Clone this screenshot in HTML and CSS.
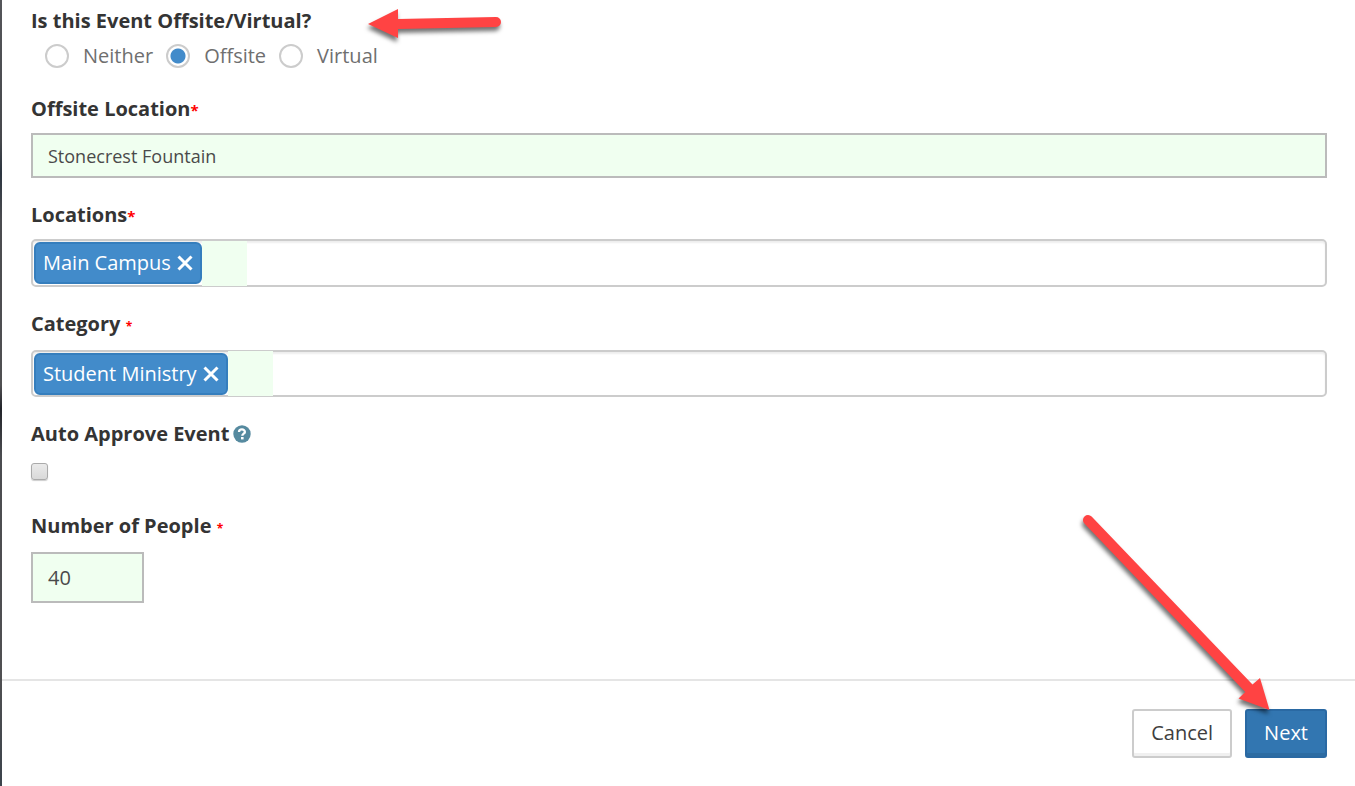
FILE: index.html
```
<!DOCTYPE html>
<html lang="en">
<head>
<meta charset="utf-8">
<meta name="viewport" content="width=device-width, initial-scale=1">
<title>Event details</title>
<link rel="stylesheet" href="styles.css">
</head>
<body>
<form class="dialog">
  <div class="dialog-body">
    <fieldset class="field choice-field">
      <legend class="label">Is this Event Offsite/Virtual?</legend>
      <div class="choices">
        <label class="choice"><input class="radio" type="radio" name="place"><span>Neither</span></label>
        <label class="choice"><input class="radio" type="radio" name="place" checked><span>Offsite</span></label>
        <label class="choice"><input class="radio" type="radio" name="place"><span>Virtual</span></label>
      </div>
    </fieldset>
    <div class="field">
      <label class="label" for="offsite">Offsite Location<span class="required">*</span></label>
      <input class="text-input" id="offsite" type="text" value="Stonecrest Fountain">
    </div>
    <div class="field">
      <label class="label" for="locations">Locations<span class="required">*</span></label>
      <div class="tag-box">
        <span class="tag">Main Campus
          <button class="tag-remove" type="button" aria-label="Remove Main Campus"><svg viewBox="0 0 16 16" width="16" height="16"><path d="M1.500 1.500L14.500 14.500M14.500 1.500L1.500 14.500"/></svg></button>
        </span>
        <input class="tag-input" id="locations" type="text">
      </div>
    </div>
    <div class="field field-loose">
      <label class="label" for="category">Category <span class="required required-small">*</span></label>
      <div class="tag-box">
        <span class="tag">Student Ministry
          <button class="tag-remove" type="button" aria-label="Remove Student Ministry"><svg viewBox="0 0 16 16" width="16" height="16"><path d="M1.500 1.500L14.500 14.500M14.500 1.500L1.500 14.500"/></svg></button>
        </span>
        <input class="tag-input" id="category" type="text">
      </div>
    </div>
    <div class="field check-field">
      <label class="label label-help" for="approve">Auto Approve Event
        <svg class="help" viewBox="0 0 18 18" width="18" height="18" aria-hidden="true"><circle cx="9" cy="9" r="8.7" fill="#568a9f"/><path d="M6 7C6.100 3.600 11.900 3.600 11.900 6.900C11.900 8.700 9.300 8.700 9.300 10.800" fill="none" stroke="#fff" stroke-width="2.300"/><rect x="8" y="12" width="2.600" height="2.400" fill="#fff"/></svg>
      </label>
      <input class="check" id="approve" type="checkbox">
    </div>
    <div class="field field-loose">
      <label class="label" for="people">Number of People <span class="required required-small">*</span></label>
      <input class="text-input number-input" id="people" type="text" inputmode="numeric" value="40">
    </div>
  </div>
  <div class="dialog-footer">
    <button class="button" type="button">Cancel</button>
    <button class="button button-primary" type="submit">Next</button>
  </div>
  <svg class="arrow arrow-top" viewBox="0 0 150 50" width="150" height="50" aria-hidden="true"><path d="M10 24L40 9V19L138 17A5 5 0 0 1 138 27L40 29V38Z"/></svg>
  <svg class="arrow arrow-next" viewBox="0 0 210 220" width="210" height="220" aria-hidden="true"><path d="M189.500 210L158.500 198.500L165.300 192L4.400 23.500A5 5 0 0 1 11.600 16.500L172.500 184.500L180 178Z"/></svg>
</form>
</body>
</html>
```
FILE: styles.css
```
* { box-sizing: border-box; }

body {
  margin: 0;
  background: #fff;
  color: #343434;
  font: 20px/28px "Open Sans", "Noto Sans", sans-serif;
}

.dialog {
  min-height: 100vh;
  position: relative;
  padding-left: 2px;
  background: linear-gradient(#55565a, #46484c 18%, #2c3540 22%, #4b4c50 28%, #505052 49%, #22242a 52%, #4b4c50 58%, #505052 86%, #3c434b) left / 2px 100% no-repeat;
}

.dialog-body {
  display: flex;
  flex-direction: column;
  gap: 23px;
  padding: 7px 28px 76px 29px;
}

.field {
  display: flex;
  flex-direction: column;
  align-items: stretch;
  gap: 10px;
  min-width: 0;
  margin: 0;
  padding: 0;
  border: 0;
}

.field-loose { gap: 12px; }

.choice-field { display: block; }

.label {
  display: block;
  padding: 0;
  font-weight: 700;
}

.required {
  color: #f00;
  font-size: 15px;
  line-height: 16px;
}

.required-small { font-size: 12px; }

.choices {
  display: flex;
  gap: 13px;
  padding: 7px 0 2px 14px;
  color: #6f6f6f;
}

.choice {
  display: flex;
  align-items: center;
  gap: 14px;
}

.radio {
  appearance: none;
  flex: none;
  width: 24px;
  height: 24px;
  margin: 0;
  border: 2px solid #ccc;
  border-radius: 50%;
  background: #fff;
}

.radio:checked { background: radial-gradient(circle, #428bca 7px, #fff 8px); }

.text-input {
  width: 100%;
  height: 45px;
  padding: 0 15px;
  border: 2px solid #bbb;
  border-radius: 0;
  background: #f0fff0;
  color: #4a4a4a;
  font: inherit;
  font-size: 18px;
}

.number-input {
  width: 113px;
  height: 51px;
  font-size: 20px;
}

.tag-box {
  display: flex;
  align-items: center;
  height: 48px;
  padding: 0 1px;
  border: 2px solid #ccc;
  border-radius: 5px;
  box-shadow: inset 0 2px 2px #eee;
}

.field-loose .tag-box { height: 47px; }

.tag {
  display: flex;
  align-items: center;
  gap: 6px;
  height: 42px;
  padding: 0 7px;
  border: 2px solid #357ebd;
  border-radius: 6px;
  background: #428bca;
  color: #fff;
  white-space: nowrap;
}

.tag-remove {
  display: flex;
  padding: 0;
  border: 0;
  background: none;
}

.tag-remove path {
  fill: none;
  stroke: #fff;
  stroke-width: 3;
}

.tag-input {
  width: 45px;
  height: 45px;
  padding: 0;
  border: 0;
  background: #f0fff0;
  font: inherit;
}

.label-help {
  display: flex;
  align-items: center;
  gap: 4px;
}

.check-field { gap: 15px; }

.check {
  appearance: none;
  width: 17px;
  height: 17px;
  margin: 0 0 9px;
  border: 1px solid #aaa;
  border-radius: 3px;
  background: linear-gradient(#eaeaea, #d9d9d9);
  box-shadow: 0 1px 1px #ccc;
}

.dialog-footer {
  display: flex;
  justify-content: flex-end;
  gap: 13px;
  padding: 28px;
  border-top: 2px solid #e5e5e5;
}

.button {
  height: 49px;
  padding: 0 17px 2px;
  border: 2px solid #ccc;
  border-radius: 3px;
  background: #fff;
  box-shadow: inset 0 -3px 0 #f0f0f0;
  color: #3e3e3e;
  font: inherit;
}

.button-primary {
  border-color: #2a69a3;
  background: #3276b1;
  box-shadow: inset 0 -3px 0 #2d6ca2;
  color: #fff;
}

.arrow {
  position: absolute;
  overflow: visible;
  fill: #ff4343;
  filter: drop-shadow(-1px 4px 2px rgba(0, 0, 0, 0.55));
  pointer-events: none;
}

.arrow-top {
  top: 0;
  left: 358px;
}

.arrow-next {
  top: 500px;
  right: 65px;
}
```
